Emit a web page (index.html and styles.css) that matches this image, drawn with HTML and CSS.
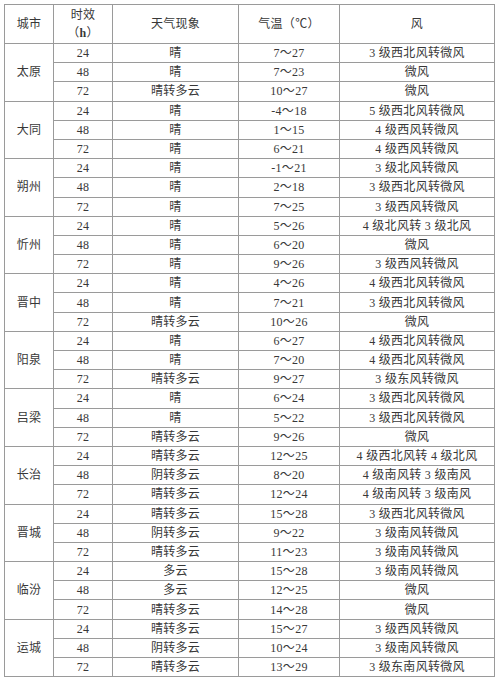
FILE: index.html
```html
<!DOCTYPE html>
<html lang="zh">
<head>
<meta charset="utf-8">
<link rel="stylesheet" href="styles.css">
</head>
<body>
<table class="wx">
<colgroup>
<col class="c-city"><col class="c-h"><col class="c-sky"><col class="c-temp"><col class="c-wind">
</colgroup>
<thead>
<tr class="head"><th>城市</th><th>时效<br>（<b>h</b>）</th><th>天气现象</th><th>气温（℃）</th><th>风</th></tr>
</thead>
<tbody>
<tr><td rowspan="3">太原</td><td>24</td><td>晴</td><td>7～27</td><td>3 级西北风转微风</td></tr>
<tr><td>48</td><td>晴</td><td>7～23</td><td>微风</td></tr>
<tr><td>72</td><td>晴转多云</td><td>10～27</td><td>微风</td></tr>
<tr><td rowspan="3">大同</td><td>24</td><td>晴</td><td>-4～18</td><td>5 级西北风转微风</td></tr>
<tr><td>48</td><td>晴</td><td>1～15</td><td>4 级西风转微风</td></tr>
<tr><td>72</td><td>晴</td><td>6～21</td><td>4 级西风转微风</td></tr>
<tr><td rowspan="3">朔州</td><td>24</td><td>晴</td><td>-1～21</td><td>3 级北风转微风</td></tr>
<tr><td>48</td><td>晴</td><td>2～18</td><td>3 级西北风转微风</td></tr>
<tr><td>72</td><td>晴</td><td>7～25</td><td>3 级西风转微风</td></tr>
<tr><td rowspan="3">忻州</td><td>24</td><td>晴</td><td>5～26</td><td>4 级北风转 3 级北风</td></tr>
<tr><td>48</td><td>晴</td><td>6～20</td><td>微风</td></tr>
<tr><td>72</td><td>晴</td><td>9～26</td><td>3 级西风转微风</td></tr>
<tr><td rowspan="3">晋中</td><td>24</td><td>晴</td><td>4～26</td><td>4 级西北风转微风</td></tr>
<tr><td>48</td><td>晴</td><td>7～21</td><td>3 级西北风转微风</td></tr>
<tr><td>72</td><td>晴转多云</td><td>10～26</td><td>微风</td></tr>
<tr><td rowspan="3">阳泉</td><td>24</td><td>晴</td><td>6～27</td><td>4 级西北风转微风</td></tr>
<tr><td>48</td><td>晴</td><td>7～20</td><td>4 级西北风转微风</td></tr>
<tr><td>72</td><td>晴转多云</td><td>9～27</td><td>3 级东风转微风</td></tr>
<tr><td rowspan="3">吕梁</td><td>24</td><td>晴</td><td>6～24</td><td>3 级西北风转微风</td></tr>
<tr><td>48</td><td>晴</td><td>5～22</td><td>3 级西北风转微风</td></tr>
<tr><td>72</td><td>晴转多云</td><td>9～26</td><td>微风</td></tr>
<tr><td rowspan="3">长治</td><td>24</td><td>晴转多云</td><td>12～25</td><td>4 级西北风转 4 级北风</td></tr>
<tr><td>48</td><td>阴转多云</td><td>8～20</td><td>4 级南风转 3 级南风</td></tr>
<tr><td>72</td><td>晴转多云</td><td>12～24</td><td>4 级南风转 3 级南风</td></tr>
<tr><td rowspan="3">晋城</td><td>24</td><td>晴转多云</td><td>15～28</td><td>3 级西北风转微风</td></tr>
<tr><td>48</td><td>阴转多云</td><td>9～22</td><td>3 级南风转微风</td></tr>
<tr><td>72</td><td>晴转多云</td><td>11～23</td><td>3 级南风转微风</td></tr>
<tr><td rowspan="3">临汾</td><td>24</td><td>多云</td><td>15～28</td><td>3 级南风转微风</td></tr>
<tr><td>48</td><td>多云</td><td>12～25</td><td>微风</td></tr>
<tr><td>72</td><td>晴转多云</td><td>14～28</td><td>微风</td></tr>
<tr><td rowspan="3">运城</td><td>24</td><td>晴转多云</td><td>15～27</td><td>3 级西风转微风</td></tr>
<tr><td>48</td><td>阴转多云</td><td>10～24</td><td>3 级南风转微风</td></tr>
<tr><td>72</td><td>晴转多云</td><td>13～29</td><td>3 级东南风转微风</td></tr>
</tbody>
</table>
</body>
</html>
```
FILE: styles.css
```css
html, body {
  margin: 0;
  background: #ffffff;
}
body {
  padding: 4px;
  font-family: "Liberation Serif", "Noto Sans CJK SC", serif;
  font-size: 12px;
  color: #383838;
}
.wx {
  border-collapse: collapse;
  table-layout: fixed;
  width: 490px;
  letter-spacing: 0.3px;
}
.c-city { width: 49px; }
.c-h { width: 59px; }
.c-sky { width: 126px; }
.c-temp { width: 101px; }
.c-wind { width: 155px; }
.wx th, .wx td {
  border: 1px solid #9a9a9a;
  padding: 0;
  text-align: center;
  vertical-align: middle;
  font-weight: normal;
  line-height: 16px;
}
.wx th b {
  font-weight: bold;
}
.wx .head {
  height: 39px;
}
.wx .head th {
  line-height: 18px;
}
.wx tbody tr {
  height: 19.2px;
}
```
